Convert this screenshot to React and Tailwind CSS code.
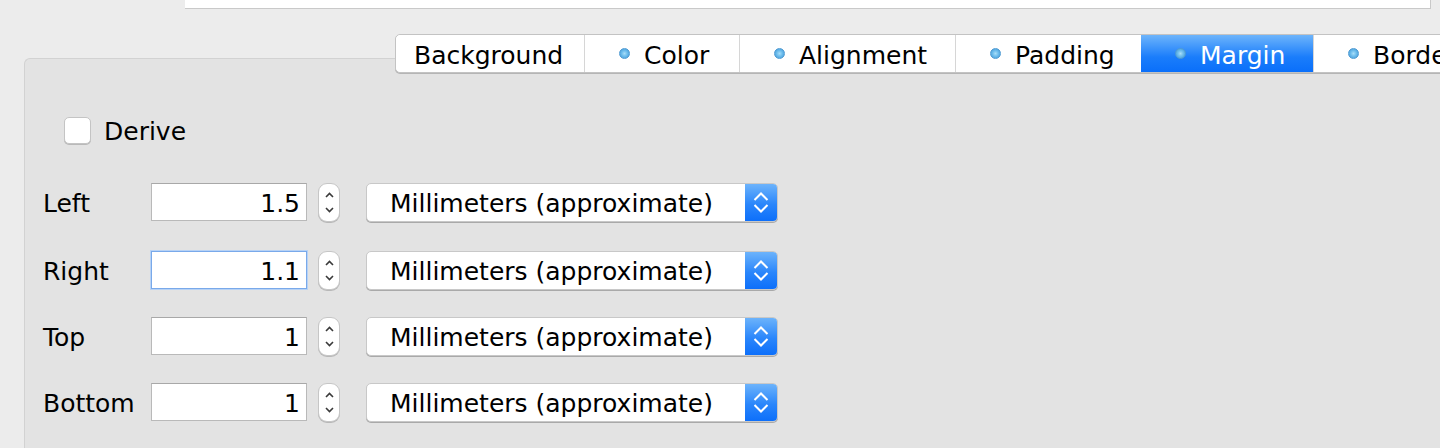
import React from "react";

const font = { fontFamily: '"DejaVu Sans", "Liberation Sans", sans-serif' };

function Dot() {
  return (
    <span className="inline-block w-[11px] h-[11px] rounded-full bg-[radial-gradient(circle_at_50%_50%,#a8def9_0%,#6cbcec_45%,#3f97d6_100%)] border border-[#4f9bd3]" />
  );
}

function Tab({ label, width, dot = true, selected = false, first = false }) {
  return (
    <div
      className={
        "flex items-center h-full shrink-0 " +
        (first ? "pl-[18px] rounded-l-[5px] " : "pl-[34px] border-l border-[#d6d6d6] ") +
        (selected
          ? "bg-[linear-gradient(#6db4fb,#1a7dfb_60%,#0a6ffa)] text-white border-l-0"
          : "bg-white text-black")
      }
      style={{ width }}
    >
      {dot && <Dot />}
      <span className={"text-[25px] leading-none pt-[3px] " + (dot ? "ml-[14px]" : "")}>{label}</span>
    </div>
  );
}

function Stepper() {
  return (
    <div className="w-[22px] h-[39px] rounded-[9px] bg-white border border-[#c6c6c6] shadow-[0_1px_0_#b8b8b8] flex flex-col items-center justify-between py-[8px]">
      <svg width="9" height="6" viewBox="0 0 9 6">
        <path d="M1 5 L4.5 1.5 L8 5" fill="none" stroke="#3a3a3a" strokeWidth="1.6" />
      </svg>
      <svg width="9" height="6" viewBox="0 0 9 6">
        <path d="M1 1 L4.5 4.5 L8 1" fill="none" stroke="#3a3a3a" strokeWidth="1.6" />
      </svg>
    </div>
  );
}

function Select() {
  return (
    <div className="w-[412px] h-[39px] rounded-[5px] bg-white border border-[#c8c8c8] shadow-[0_1px_0_#a9a9a9] flex items-stretch overflow-hidden">
      <div className="flex-1 flex items-center pl-[23px] pt-[2px] text-[25px] text-black leading-none">
        Millimeters (approximate)
      </div>
      <div className="w-[32px] bg-[linear-gradient(#6cb3fb,#2a86fb_55%,#0d6ffa)] flex flex-col items-center justify-center gap-[3px]">
        <svg width="16" height="9" viewBox="0 0 16 9">
          <path d="M1.5 8 L8 1.5 L14.5 8" fill="none" stroke="#ffffff" strokeWidth="2" />
        </svg>
        <svg width="16" height="9" viewBox="0 0 16 9">
          <path d="M1.5 1 L8 7.5 L14.5 1" fill="none" stroke="#ffffff" strokeWidth="2" />
        </svg>
      </div>
    </div>
  );
}

function Row({ label, value, focused = false, className = "" }) {
  return (
    <div className={"flex items-center h-[40px] " + className}>
      <div className="w-[108px] text-[25px] text-black leading-none pt-[2px]">{label}</div>
      <div
        className={
          "w-[156px] h-[38px] bg-white flex items-center justify-end pr-[6px] pt-[2px] text-[25px] text-black leading-none border " +
          (focused ? "border-[#79a9ea] shadow-[0_0_0_1px_#b7d2f5]" : "border-[#b9b9b9] border-t-[#a8a8a8]")
        }
      >
        {value}
      </div>
      <div className="ml-[11px]">
        <Stepper />
      </div>
      <div className="ml-[26px]">
        <Select />
      </div>
    </div>
  );
}

export default function App() {
  return (
    <div className="w-[1440px] h-[448px] overflow-hidden bg-[#ececec]" style={font}>
      <div className="ml-[185px] w-[1246px] h-[9px] bg-white border-b border-r border-[#c9c9c9]" />
      <div className="relative z-10 ml-[395px] mt-[25px] h-[39px] flex w-[1100px] border border-[#c3c3c3] rounded-l-[5px] shadow-[0_1px_0_#b5b5b5] bg-white">
        <Tab label="Background" width={188} dot={false} first />
        <Tab label="Color" width={155} />
        <Tab label="Alignment" width={216} />
        <Tab label="Padding" width={186} />
        <Tab label="Margin" width={172} selected />
        <Tab label="Border" width={200} />
      </div>
      <div className="-mt-[15px] ml-[24px] w-[1440px] h-[420px] bg-[#e3e3e3] border-t border-l border-[#d2d2d2] rounded-tl-[6px] pl-[18px]">
        <div className="flex items-center pt-[57px] pl-[21px]">
          <div className="w-[27px] h-[27px] rounded-[5px] bg-white border border-[#c4c4c4] shadow-[0_1px_0_#b9b9b9]" />
          <span className="ml-[13px] pt-[3px] text-[25px] text-black leading-none">Derive</span>
        </div>
        <Row label="Left" value="1.5" className="mt-[38px]" />
        <Row label="Right" value="1.1" focused className="mt-[28px]" />
        <Row label="Top" value="1" className="mt-[26px]" />
        <Row label="Bottom" value="1" className="mt-[26px]" />
      </div>
    </div>
  );
}
